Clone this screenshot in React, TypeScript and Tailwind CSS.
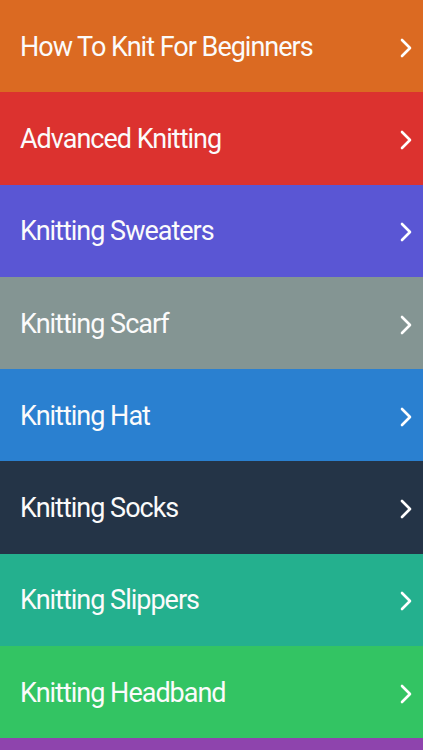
const items = [
  { title: "How To Knit For Beginners", bg: "bg-[#db6a22]" },
  { title: "Advanced Knitting", bg: "bg-[#dc322f]" },
  { title: "Knitting Sweaters", bg: "bg-[#5a56d4]" },
  { title: "Knitting Scarf", bg: "bg-[#849593]" },
  { title: "Knitting Hat", bg: "bg-[#2a80d0]" },
  { title: "Knitting Socks", bg: "bg-[#243447]" },
  { title: "Knitting Slippers", bg: "bg-[#24b08e]" },
  { title: "Knitting Headband", bg: "bg-[#33c463]" },
];

function Chevron() {
  return (
    <svg width="12" height="20" viewBox="0 0 12 20" className="mt-[3px] shrink-0" aria-hidden>
      <polyline
        points="2,2 10,10 2,18"
        fill="none"
        stroke="white"
        strokeWidth="2.6"
        strokeLinecap="round"
        strokeLinejoin="round"
      />
    </svg>
  );
}

export default function App() {
  return (
    <div className="flex h-[750px] w-[423px] flex-col overflow-hidden bg-[#8e44ad] font-['Roboto',sans-serif]">
      {items.map((item) => (
        <div
          key={item.title}
          className={`flex h-[92.3px] shrink-0 items-center justify-between pl-5 pr-[11px] ${item.bg}`}
        >
          <span className="mt-[2px] text-[27px] leading-none tracking-[-1px] text-[#fbfbfb]">{item.title}</span>
          <Chevron />
        </div>
      ))}
    </div>
  );
}
